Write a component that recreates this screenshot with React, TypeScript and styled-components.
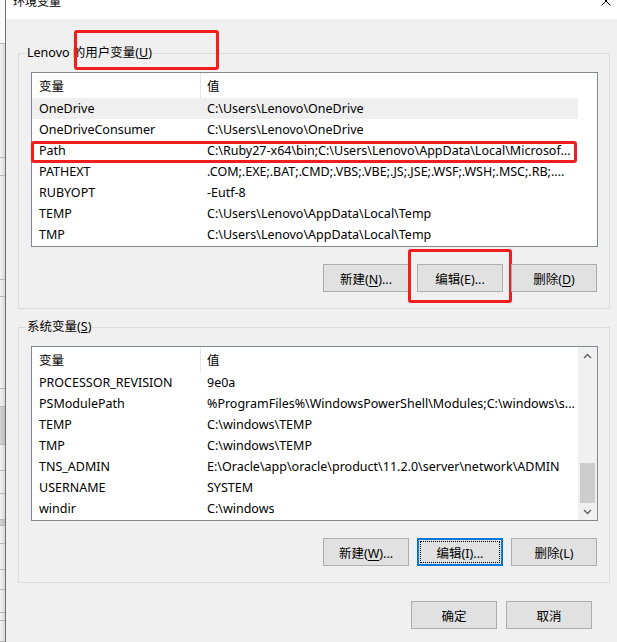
import React from "react";
import styled, { createGlobalStyle, css } from "styled-components";

const GlobalStyle = createGlobalStyle`
  html, body { margin: 0; padding: 0; background: #f0f0f0; }
  body {
    font-family: "Segoe UI", "Noto Sans", "Noto Sans CJK SC", sans-serif;
    font-size: 12px;
    color: #000;
  }
  *, *::before, *::after { box-sizing: border-box; }
`;

const RED = "#f21d1d";

const Screen = styled.div`
  display: flex;
  width: 617px;
  height: 642px;
  overflow: hidden;
`;

const BackWindow = styled.div`
  width: 5px;
  flex: none;
  display: flex;
  flex-direction: column;
  background: linear-gradient(to right, #f2f2f2, #d8d8d8);
`;

const BackSeg = styled.div<{ $h: number; $white?: boolean; $dark?: boolean }>`
  flex: none;
  height: ${(p) => p.$h}px;
  border-bottom: 1px solid #b9b9b9;
  ${(p) => p.$white && css`background: #fafafa;`}
  ${(p) => p.$dark && css`background: linear-gradient(to right, #d4d4d4, #bcbcbc);`}
`;

const DialogEdge = styled.div`
  width: 1px;
  flex: none;
  background: #6f6f6f;
`;

const Dialog = styled.div`
  flex: 1;
  display: flex;
  flex-direction: column;
  background: #f0f0f0;
`;

const TitleBar = styled.div`
  height: 19px;
  flex: none;
  background: #fff;
  display: flex;
  justify-content: space-between;
  align-items: flex-start;
  padding-left: 7px;
  overflow: hidden;
`;

const TitleText = styled.span`
  font-size: 12px;
  line-height: 16px;
  margin-top: -6px;
`;

const CloseIcon = styled.svg`
  margin-top: -4px;
  margin-right: 6px;
`;

const Body = styled.div`
  display: flex;
  flex-direction: column;
  padding: 0 7px 0 12px;
`;

const GroupBox = styled.fieldset<{ $top: number }>`
  margin: ${(p) => p.$top}px 0 0 0;
  padding: 0 12px 16px 12px;
  border: 1px solid #dcdcdc;
  min-width: 0;
`;

const Legend = styled.legend`
  position: relative;
  margin-left: -5px;
  padding: 0 1px;
  line-height: 16px;
  height: 16px;
  font-size: 12.5px;
`;

const LegendMark = styled.span`
  position: absolute;
  left: 48px;
  top: -15px;
  width: 145px;
  height: 40px;
  border: 3px solid ${RED};
  border-radius: 3px;
  pointer-events: none;
`;

const ListView = styled.div<{ $top: number }>`
  margin-top: ${(p) => p.$top}px;
  margin-right: -1px;
  border: 1px solid #828790;
  background: #fff;
  display: flex;
  height: 175px;
  font-size: 12.5px;
`;

const Table = styled.div`
  width: 546px;
  flex: none;
  display: flex;
  flex-direction: column;
`;

const HeaderRow = styled.div`
  height: 25px;
  display: grid;
  grid-template-columns: 168px 1fr;
  align-items: center;
`;

const HeaderCell = styled.div<{ $sep?: boolean }>`
  height: 100%;
  display: flex;
  align-items: center;
  padding-left: ${(p) => (p.$sep ? 6 : 7)}px;
  ${(p) => p.$sep && css`border-left: 1px solid #e5e5e5;`}
`;

const Row = styled.div<{ $selected?: boolean; $marked?: boolean }>`
  position: relative;
  height: 21px;
  display: grid;
  grid-template-columns: 168px 1fr;
  align-items: center;
  background: ${(p) => (p.$selected ? "#efefef" : "transparent")};
  ${(p) =>
    p.$marked &&
    css`
      &::after {
        content: "";
        position: absolute;
        left: -1px;
        top: 1px;
        width: 546px;
        height: 22px;
        border: 3px solid ${RED};
        border-radius: 3px;
        pointer-events: none;
      }
    `}
`;

const Cell = styled.div`
  padding-left: 7px;
  white-space: nowrap;
  overflow: hidden;
  line-height: 21px;
`;

const SideArea = styled.div`
  flex: 1;
`;

const ScrollBar = styled.div`
  flex: 1;
  display: flex;
  flex-direction: column;
  background: #f0f0f0;
`;

const ScrollButton = styled.div`
  height: 17px;
  flex: none;
  display: flex;
  align-items: center;
  justify-content: center;
`;

const ScrollTrack = styled.div`
  flex: 1;
  display: flex;
  flex-direction: column;
  justify-content: flex-end;
  align-items: center;
`;

const Thumb = styled.div`
  width: 15px;
  height: 40px;
  background: #cdcdcd;
`;

const ButtonRow = styled.div<{ $top: number; $right: number; $gap: number }>`
  display: flex;
  justify-content: flex-end;
  gap: ${(p) => p.$gap}px;
  margin-top: ${(p) => p.$top}px;
  padding-right: ${(p) => p.$right}px;
`;

const Button = styled.button<{ $focused?: boolean; $marked?: boolean }>`
  position: relative;
  width: 86px;
  height: 28px;
  padding: 0;
  background: #e1e1e1;
  border: 1px solid #adadad;
  font-family: "Segoe UI", "Noto Sans", "Noto Sans CJK SC", sans-serif;
  font-size: 12.5px;
  color: #000;
  u { text-underline-offset: 2px; }
  ${(p) =>
    p.$focused &&
    css`
      border: 2px solid #0078d7;
      outline: 1px dotted #000;
      outline-offset: -4px;
    `}
  ${(p) =>
    p.$marked &&
    css`
      &::after {
        content: "";
        position: absolute;
        left: -10px;
        top: -16px;
        width: 104px;
        height: 54px;
        border: 3px solid ${RED};
        border-radius: 3px;
        pointer-events: none;
      }
    `}
`;

type Var = { name: string; value: string };

const userVars: Var[] = [
  { name: "OneDrive", value: "C:\\Users\\Lenovo\\OneDrive" },
  { name: "OneDriveConsumer", value: "C:\\Users\\Lenovo\\OneDrive" },
  { name: "Path", value: "C:\\Ruby27-x64\\bin;C:\\Users\\Lenovo\\AppData\\Local\\Microsof..." },
  { name: "PATHEXT", value: ".COM;.EXE;.BAT;.CMD;.VBS;.VBE;.JS;.JSE;.WSF;.WSH;.MSC;.RB;...." },
  { name: "RUBYOPT", value: "-Eutf-8" },
  { name: "TEMP", value: "C:\\Users\\Lenovo\\AppData\\Local\\Temp" },
  { name: "TMP", value: "C:\\Users\\Lenovo\\AppData\\Local\\Temp" },
];

const sysVars: Var[] = [
  { name: "PROCESSOR_REVISION", value: "9e0a" },
  { name: "PSModulePath", value: "%ProgramFiles%\\WindowsPowerShell\\Modules;C:\\windows\\s..." },
  { name: "TEMP", value: "C:\\windows\\TEMP" },
  { name: "TMP", value: "C:\\windows\\TEMP" },
  { name: "TNS_ADMIN", value: "E:\\Oracle\\app\\oracle\\product\\11.2.0\\server\\network\\ADMIN" },
  { name: "USERNAME", value: "SYSTEM" },
  { name: "windir", value: "C:\\windows" },
];

const backSegs = [
  { h: 44, white: true },
  { h: 114 },
  { h: 18 },
  { h: 104 },
  { h: 17 },
  { h: 92 },
  { h: 18 },
  { h: 38, dark: true },
  { h: 26 },
  { h: 23 },
  { h: 26 },
  { h: 6, dark: true },
  { h: 18 },
  { h: 26 },
  { h: 20 },
  { h: 23 },
  { h: 8 },
  { h: 21 },
];

const Chevron: React.FC<{ up?: boolean }> = ({ up }) => (
  <svg width="9" height="6" viewBox="0 0 9 6">
    <path
      d={up ? "M1 5 L4.5 1.5 L8 5" : "M1 1 L4.5 4.5 L8 1"}
      fill="none"
      stroke="#606060"
      strokeWidth="1.4"
    />
  </svg>
);

const VarList: React.FC<{
  vars: Var[];
  top: number;
  selected?: number;
  marked?: number;
  scroll?: boolean;
}> = ({ vars, top, selected, marked, scroll }) => (
  <ListView $top={top}>
    <Table>
      <HeaderRow>
        <HeaderCell>变量</HeaderCell>
        <HeaderCell $sep>值</HeaderCell>
      </HeaderRow>
      {vars.map((v, i) => (
        <Row key={v.name + i} $selected={i === selected} $marked={i === marked}>
          <Cell>{v.name}</Cell>
          <Cell>{v.value}</Cell>
        </Row>
      ))}
    </Table>
    {scroll ? (
      <ScrollBar>
        <ScrollButton>
          <Chevron up />
        </ScrollButton>
        <ScrollTrack>
          <Thumb />
        </ScrollTrack>
        <ScrollButton>
          <Chevron />
        </ScrollButton>
      </ScrollBar>
    ) : (
      <SideArea />
    )}
  </ListView>
);

export default function App() {
  return (
    <Screen>
      <GlobalStyle />
      <BackWindow>
        {backSegs.map((s, i) => (
          <BackSeg key={i} $h={s.h} $white={s.white} $dark={s.dark} />
        ))}
      </BackWindow>
      <DialogEdge />
      <Dialog>
        <TitleBar>
          <TitleText>环境变量</TitleText>
          <CloseIcon width="10" height="10" viewBox="0 0 10 10">
            <path d="M0.5 0.5 L9.5 9.5 M9.5 0.5 L0.5 9.5" stroke="#000" strokeWidth="1" fill="none" />
          </CloseIcon>
        </TitleBar>
        <Body>
          <GroupBox $top={26}>
            <Legend>
              Lenovo 的用户变量(<u>U</u>)
              <LegendMark />
            </Legend>
            <VarList vars={userVars} top={11} selected={0} marked={2} />
            <ButtonRow $top={17} $right={0} $gap={8}>
              <Button>
                新建(<u>N</u>)...
              </Button>
              <Button $marked>编辑(E)...</Button>
              <Button>
                删除(<u>D</u>)
              </Button>
            </ButtonRow>
          </GroupBox>
          <GroupBox $top={10}>
            <Legend>
              系统变量(<u>S</u>)
            </Legend>
            <VarList vars={sysVars} top={11} scroll />
            <ButtonRow $top={17} $right={0} $gap={8}>
              <Button>
                新建(<u>W</u>)...
              </Button>
              <Button $focused>编辑(I)...</Button>
              <Button>删除(L)</Button>
            </ButtonRow>
          </GroupBox>
          <ButtonRow $top={18} $right={18} $gap={9}>
            <Button>确定</Button>
            <Button>取消</Button>
          </ButtonRow>
        </Body>
      </Dialog>
    </Screen>
  );
}
